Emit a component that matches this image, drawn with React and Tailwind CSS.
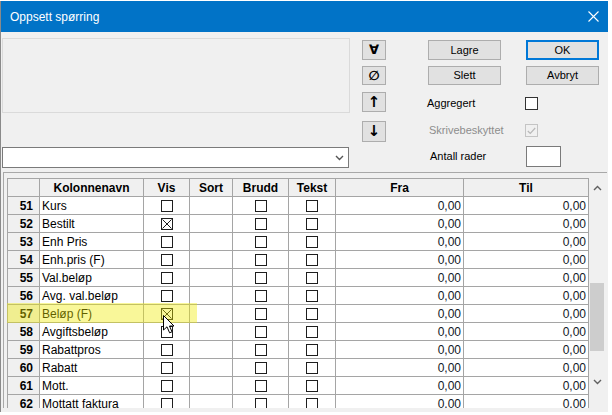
import React from 'react';

const rows = [
  { n: 51, name: 'Kurs' },
  { n: 52, name: 'Bestilt', vis: true },
  { n: 53, name: 'Enh Pris' },
  { n: 54, name: 'Enh.pris (F)' },
  { n: 55, name: 'Val.beløp' },
  { n: 56, name: 'Avg. val.beløp' },
  { n: 57, name: 'Beløp (F)', vis: true },
  { n: 58, name: 'Avgiftsbeløp' },
  { n: 59, name: 'Rabattpros' },
  { n: 60, name: 'Rabatt' },
  { n: 61, name: 'Mott.' },
  { n: 62, name: 'Mottatt faktura' },
];

function Box({ checked }) {
  return (
    <span className="block w-[12px] h-[12px] border border-[#1e1e1e] bg-white">
      {checked && (
        <svg width="10" height="10" viewBox="0 0 10 10" className="block">
          <path d="M0.5 0.5 L9.5 9.5 M9.5 0.5 L0.5 9.5" stroke="#1e1e1e" strokeWidth="1" />
        </svg>
      )}
    </span>
  );
}

function Chevron({ up, color = '#606060' }) {
  return (
    <svg width="9" height="6" viewBox="0 0 9 6">
      <path d={up ? 'M1 5 L4.5 1.5 L8 5' : 'M1 1 L4.5 4.5 L8 1'} fill="none" stroke={color} strokeWidth="1.4" />
    </svg>
  );
}

const cell = 'border-r border-b border-[#a5a5a5] h-[18px] flex items-center';
const head = `${cell} bg-[#f0f0f0] justify-center font-bold text-[12px]`;

export default function App() {
  return (
    <div className="relative w-[612px] h-[415px] overflow-hidden bg-white font-['Liberation_Sans',Arial,sans-serif] text-black">
      <div className="mt-[1px] w-[608px] h-[411px] bg-[#f0f0f0] border-l border-[#8a8a8a] flex flex-col">
        {/* title bar */}
        <div className="h-[31px] bg-[#0173c7] flex items-center text-white text-[12px]">
          <span className="pl-[9px]">Oppsett spørring</span>
          <svg className="ml-auto mr-[9px]" width="11" height="11" viewBox="0 0 11 11">
            <path d="M0.5 0.5 L10.5 10.5 M10.5 0.5 L0.5 10.5" stroke="#fff" strokeWidth="1.1" />
          </svg>
        </div>

        {/* top section */}
        <div className="flex h-[140px] text-[11px]">
          <div className="w-[349px] pl-[1px] pt-[6px] flex flex-col">
            <div className="h-[75px] w-[348px] border border-[#dadada] bg-[#f0f0f0]" />
            <div className="mt-[34px] h-[21px] w-[347px] border border-[#7a7a7a] bg-white flex items-center justify-end pr-[4px]">
              <Chevron color="#555" />
            </div>
          </div>

          <div className="ml-[12px] pt-[8px] flex flex-col font-['DejaVu_Sans',sans-serif] font-bold">
            <div className="w-[24px] h-[20px] bg-[#e1e1e1] border border-[#adadad] flex items-center justify-center text-[13px]">∀</div>
            <div className="mt-[6px] w-[24px] h-[19px] bg-[#e1e1e1] border border-[#adadad] flex items-center justify-center text-[13px]">∅</div>
            <div className="mt-[7px] w-[24px] h-[20px] bg-[#e1e1e1] border border-[#adadad] flex items-center justify-center text-[15px]">↑</div>
            <div className="mt-[9px] w-[24px] h-[21px] bg-[#e1e1e1] border border-[#adadad] flex items-center justify-center text-[15px]">↓</div>
          </div>

          <div className="ml-[41px] pt-[8px] flex flex-col">
            <div className="flex">
              <div className="ml-[1px] w-[73px] h-[20px] bg-[#e1e1e1] border border-[#adadad] flex items-center justify-center">Lagre</div>
              <div className="ml-[25px] w-[73px] h-[20px] bg-[#e1e1e1] border-2 border-[#0078d7] flex items-center justify-center">OK</div>
            </div>
            <div className="flex mt-[6px]">
              <div className="ml-[1px] w-[73px] h-[19px] bg-[#e1e1e1] border border-[#adadad] flex items-center justify-center">Slett</div>
              <div className="ml-[25px] w-[73px] h-[19px] bg-[#e1e1e1] border border-[#adadad] flex items-center justify-center">Avbryt</div>
            </div>
            <div className="flex items-center mt-[12px] h-[13px]">
              <span className="w-[98px]">Aggregert</span>
              <span className="w-[13px] h-[13px] border border-[#333] bg-white" />
            </div>
            <div className="flex items-center mt-[14px] h-[13px]">
              <span className="w-[98px] pl-[2px] text-[#8d8d8d]">Skrivebeskyttet</span>
              <span className="w-[13px] h-[13px] border border-[#c4c4c4] bg-[#f0f0f0] flex items-center justify-center">
                <svg width="9" height="8" viewBox="0 0 9 8">
                  <path d="M0.8 4 L3.3 6.5 L8.2 1" fill="none" stroke="#b8b8b8" strokeWidth="1.2" />
                </svg>
              </span>
            </div>
            <div className="flex items-center mt-[9px] h-[21px]">
              <span className="w-[99px] pl-[3px]">Antall rader</span>
              <span className="w-[35px] h-[21px] border border-[#7a7a7a] bg-white" />
            </div>
          </div>
        </div>

        {/* grid panel */}
        <div className="ml-[2px] w-[604px] h-[236px] border-t border-l border-[#a8a8a8] pt-[5px] pl-[3px] overflow-hidden">
          <div className="flex">
            <div className="w-[582px] border-l border-t border-[#a5a5a5]">
              <div className="grid grid-cols-[32px_104px_46px_43px_56px_47px_128px_125px] text-[12px]">
                <div className={`${cell} bg-[#f0f0f0]`} />
                <div className={head}>Kolonnenavn</div>
                <div className={head}>Vis</div>
                <div className={head}>Sort</div>
                <div className={head}>Brudd</div>
                <div className={head}>Tekst</div>
                <div className={head}>Fra</div>
                <div className={head}>Til</div>
                {rows.map((r) => (
                  <React.Fragment key={r.n}>
                    <div className={`${cell} bg-[#f0f0f0] justify-end pr-[6px] font-bold`}>{r.n}</div>
                    <div className={`${cell} bg-white pl-[2px]`}>{r.name}</div>
                    <div className={`${cell} bg-white justify-center`}><Box checked={r.vis} /></div>
                    <div className={`${cell} bg-white`} />
                    <div className={`${cell} bg-white justify-center`}><Box /></div>
                    <div className={`${cell} bg-white justify-center`}><Box /></div>
                    <div className={`${cell} bg-white justify-end pr-[2px] text-[#111827]`}>0,00</div>
                    <div className={`${cell} bg-white justify-end pr-[2px] text-[#111827]`}>0,00</div>
                  </React.Fragment>
                ))}
              </div>
            </div>
            <div className="w-[16px] h-[240px] bg-[#f0f0f0] flex flex-col border-t border-[#f0f0f0]">
              <div className="h-[18px] flex items-center justify-center"><Chevron up /></div>
              <div className="mt-[86px] h-[68px] mx-[1px] bg-[#cdcdcd]" />
              <div className="mt-[22px] h-[18px] flex items-center justify-center"><Chevron /></div>
            </div>
          </div>
        </div>
      </div>

      {/* highlighter over row 57 */}
      <div className="absolute left-[7px] top-[303px] w-[190px] h-[20px] bg-[#f0ec00]/40" />

      {/* mouse pointer */}
      <svg className="absolute left-[163px] top-[315px]" width="14" height="20" viewBox="0 0 14 20">
        <path d="M0.5 0.5 L0.5 15 L4 11.8 L6.6 17.8 L9 16.8 L6.5 11 L11 11 Z" fill="#fff" stroke="#000" strokeWidth="1" strokeLinejoin="round" />
      </svg>
    </div>
  );
}
